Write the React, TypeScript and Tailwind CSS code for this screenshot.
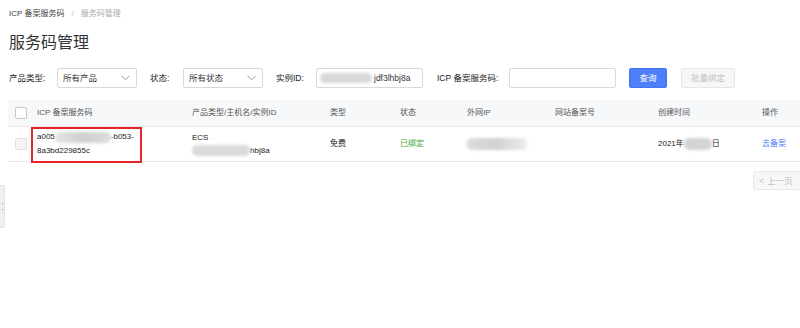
import React from "react";

const font = { fontFamily: '"Liberation Sans", "Noto Sans CJK SC", sans-serif' };

function Chevron() {
  return (
    <svg width="9" height="6" viewBox="0 0 9 6" fill="none">
      <path d="M0.5 0.8 L4.5 4.8 L8.5 0.8" stroke="#8c8c8c" strokeWidth="0.9" />
    </svg>
  );
}

function Select({ value }: { value: string }) {
  return (
    <div className="w-[80px] h-[20px] border border-[#d9d9d9] rounded-[2px] flex items-center justify-between pl-[5px] pr-[6px] text-[#333]">
      <span>{value}</span>
      <Chevron />
    </div>
  );
}

function Blob({ w, h = 11, cls = "" }: { w: number; h?: number; cls?: string }) {
  return (
    <span
      className={"inline-block align-middle rounded-[5px] blur-[1.5px] " + cls}
      style={{ width: w, height: h }}
    />
  );
}

export default function App() {
  return (
    <div className="w-[800px] h-[328px] bg-white relative overflow-hidden text-[8.5px] leading-[12px]" style={font}>
      {/* breadcrumb */}
      <div className="pt-[8px] pl-[9px] flex items-center gap-[7px] text-[8px]">
        <span className="text-[#444]">ICP 备案服务码</span>
        <span className="text-[#bbb]">/</span>
        <span className="text-[#aaa]">服务码管理</span>
      </div>
      {/* title */}
      <div className="mt-[11px] pl-[9px] text-[16px] leading-[24px] text-[#333]">服务码管理</div>
      {/* filters */}
      <div className="mt-[13px] pl-[9px] flex items-center h-[20px] text-[#222]">
        <span className="w-[48px]">产品类型:</span>
        <Select value="所有产品" />
        <span className="ml-[13px] w-[33px]">状态:</span>
        <Select value="所有状态" />
        <span className="ml-[13px] w-[40px]">实例ID:</span>
        <div className="w-[107px] h-[20px] border border-[#d9d9d9] rounded-[2px] flex items-center pl-[3px]">
          <Blob w={52} h={10} cls="bg-[#d8d8d8]" />
          <span className="ml-[2px] text-[#333]">jdf3lhbj8a</span>
        </div>
        <span className="ml-[14px] w-[72px]">ICP 备案服务码:</span>
        <div className="w-[107px] h-[20px] border border-[#d9d9d9] rounded-[2px]" />
        <button className="ml-[13px] w-[38px] h-[20px] rounded-[2px] bg-[#4e7ff8] text-white border border-[#4275f2]">查询</button>
        <button className="ml-[14px] w-[54px] h-[20px] rounded-[2px] bg-[#f6f7f9] text-[#bfbfbf] border border-[#e4e6ea]">批量绑定</button>
      </div>
      {/* table */}
      <div className="mt-[12px] ml-[8px] text-[8px]">
        <div className="grid grid-cols-[29px_155px_138px_70px_67px_88px_103px_104px_1fr] h-[27px] items-center bg-[#f7f8fa] border-b border-[#e8e8e8] text-[#555]">
          <div className="pl-[7px]">
            <div className="w-[12px] h-[12px] bg-white border border-[#c8c8c8] rounded-[2px]" />
          </div>
          <div>ICP 备案服务码</div>
          <div>产品类型/主机名/实例ID</div>
          <div>类型</div>
          <div>状态</div>
          <div>外网IP</div>
          <div>网站备案号</div>
          <div>创建时间</div>
          <div>操作</div>
        </div>
        <div className="grid grid-cols-[29px_155px_138px_70px_67px_88px_103px_104px_1fr] h-[35px] items-center border-b border-[#e6e6e6] text-[#222]">
          <div className="pl-[7px]">
            <div className="w-[12px] h-[12px] bg-[#f4f4f4] border border-[#e0e0e0] rounded-[2px]" />
          </div>
          <div className="relative h-full flex flex-col justify-center">
            <div className="flex items-center">
              <span>a005</span>
              <Blob w={56} h={11} cls="bg-gradient-to-r from-[#e4e4e4] via-[#cfcfcf] to-[#dcdcdc]" />
              <span>-b053-</span>
            </div>
            <div className="mt-[2px]">8a3bd229855c</div>
            <div className="absolute left-[-6px] top-0 w-[111px] h-[36px] border-2 border-[#e8232a]" />
          </div>
          <div className="flex flex-col justify-center">
            <div>ECS</div>
            <div className="flex items-center mt-[1px]">
              <Blob w={58} h={11} cls="bg-[#dadada]" />
              <span>hbj8a</span>
            </div>
          </div>
          <div>免费</div>
          <div className="text-[#3aa83a]">已绑定</div>
          <div>
            <Blob w={60} h={12} cls="bg-gradient-to-r from-[#dcdcdc] via-[#d0d0d0] to-[#eeeef2]" />
          </div>
          <div />
          <div className="flex items-center">
            <span>2021年</span>
            <Blob w={28} h={12} cls="bg-[#d4d4d4]" />
            <span>日</span>
          </div>
          <div className="text-[#4a7ef6]">去备案</div>
        </div>
      </div>
      {/* pagination */}
      <div className="mt-[9px] flex justify-end">
        <div className="w-[50px] mr-[-3px] h-[19px] bg-[#f6f7f9] border border-[#e6e8eb] rounded-[2px] flex items-center pl-[5px] gap-[3px] text-[#c0c0c0]">
          <span>&lt;</span>
          <span>上一页</span>
        </div>
      </div>
      {/* left edge tab */}
      <div className="absolute left-0 top-[185px] w-[5px] h-[43px] bg-[#f0f0f0] border border-l-0 border-[#e2e2e2] rounded-r-[2px] flex flex-col items-center justify-center gap-[5px]">
        <div className="w-[1px] h-[1px] bg-[#999]" />
        <div className="w-[1px] h-[1px] bg-[#999]" />
      </div>
    </div>
  );
}
